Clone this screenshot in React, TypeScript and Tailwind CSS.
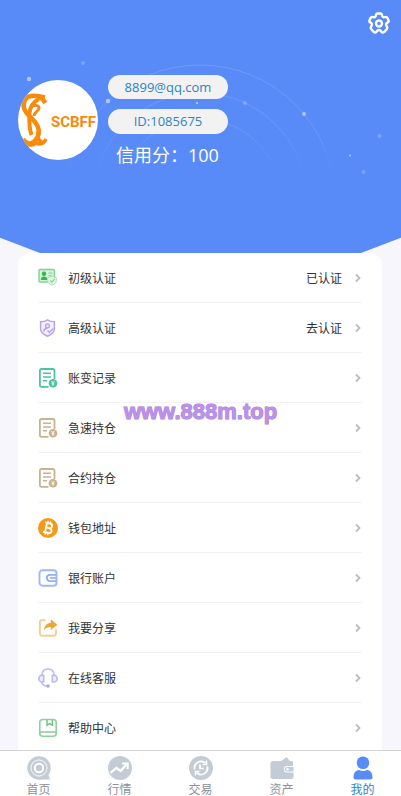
import type { ReactNode } from 'react'
import clsx from 'clsx'

type MenuItem = {
  label: string
  icon: ReactNode
  status?: string
}

type TabItem = {
  label: string
  icon: ReactNode
  active?: boolean
}

const IdCardIcon = () => (
  <svg viewBox='0 0 20 20' className='size-5 shrink-0' fill='none'>
    <rect x='1' y='1.5' width='15.500' height='12.500' rx='1.200' fill='#d5f2da' stroke='#7fd490' strokeWidth='1.400' />
    <circle cx='6' cy='5.800' r='2.200' fill='#35b653' />
    <path d='M2.800 12c0-2.500 1.200-3.500 3.200-3.500s3.400 1 3.400 3.500z' fill='#35b653' />
    <path d='M10.500 5h4M10.500 7.700h3' stroke='#7fd490' />
    <path d='M14 8.200l4.300 1.500v3c0 2.200-1.700 3.500-4.300 4.500-2.600-1-4.300-2.300-4.300-4.500v-3z' fill='#e2f7e6' stroke='#a6e0b1' />
    <path d='M12 12.500l1.700 1.800 3-3.400' stroke='#8bd79a' strokeWidth='1.300' />
  </svg>
)

const ShieldIcon = () => (
  <svg viewBox='0 0 20 20' className='size-5 shrink-0' fill='none' stroke='#b9a3ec'>
    <path d='M9.500 1.800c2.100 1.500 4.400 2 6.900 2v7.200c0 3.400-2.500 5.300-6.900 7.200-4.400-1.900-6.900-3.800-6.900-7.200V3.800c2.500 0 4.800-.5 6.900-2z' fill='#f4f0fe' strokeWidth='1.500' />
    <circle cx='9.500' cy='7.800' r='2' fill='#e7dffb' strokeWidth='1.300' />
    <path d='M5.700 13.700c.3-2.200 1.500-3.400 3.800-3.400M9.500 12.500l1.900 1.900 3.800-3.900' strokeWidth='1.500' />
  </svg>
)

const DocumentIcon = ({ color }: { color: string }) => (
  <svg viewBox='0 0 20 20' className='size-5 shrink-0' fill='none' stroke={color} strokeWidth='1.800'>
    <path d='M10.500 18.800H3.500a1.600 1.600 0 0 1-1.600-1.600V2.600A1.600 1.600 0 0 1 3.500 1h11.400a1.600 1.600 0 0 1 1.600 1.600V11' />
    <path d='M5 5.300h8M5 9h8M5 12.700h4' strokeWidth='1.600' />
    <circle cx='15' cy='15.300' r='4.300' fill={color} stroke='none' />
    <path d='M13.500 13l1.500 1.900 1.500-1.900M15 14.900v3M13.600 15.800h2.800' stroke='#fff' strokeWidth='.9' />
  </svg>
)

const BitcoinIcon = () => (
  <svg viewBox='0 0 20 20' className='size-5 shrink-0' fill='none'>
    <circle cx='10' cy='10' r='10' fill='#f59a17' />
    <g transform='rotate(13 10 10)' stroke='#fff' strokeWidth='1.900'>
      <path d='M6 5.200h5c3.300 0 3.300 4.600 0 4.600H8M11 9.800c4.200 0 4.200 5 0 5H6M8 5.200v9.600' />
      <path d='M8.600 3v2M11.200 3v2M8.600 15v2M11.200 15v2' strokeWidth='1.400' />
    </g>
  </svg>
)

const WalletIcon = () => (
  <svg viewBox='0 0 20 20' className='size-5 shrink-0' fill='none' stroke='#9db8f4' strokeWidth='1.900'>
    <rect x='1.500' y='2.300' width='17' height='15.400' rx='3' />
    <path d='M18.500 6.900h-6.600a3 3 0 0 0 0 6.200h6.600' stroke='#8eaef2' />
    <path d='M11.800 10h6.500' stroke='#8eaef2' strokeWidth='1.600' />
  </svg>
)

const ShareIcon = () => (
  <svg viewBox='0 0 20 20' className='size-5 shrink-0' fill='none'>
    <path d='M7.500 2.200H4A2.200 2.200 0 0 0 1.900 4.400v11.100a2.200 2.200 0 0 0 2.200 2.200h11.700a2.200 2.200 0 0 0 2.200-2.200V11.500' stroke='#efcf94' strokeWidth='1.900' />
    <path d='M12.800 1.200l6.600 5.500-6.600 5.200V9c-3 0-5 .7-6.800 3.200.3-4.500 2.900-7 6.800-7.400z' fill='#e9a93a' />
  </svg>
)

const HeadsetIcon = () => (
  <svg viewBox='0 0 20 20' className='size-5 shrink-0' fill='none' stroke='#bdb9f3' strokeWidth='1.600'>
    <path d='M3.700 7.500C4 3.500 6.500 1 10 1s6 2.500 6.300 6.500' />
    <path d='M5.700 7.300v6.500c-3 .7-4.900-.8-4.900-3.200s1.900-4 4.900-3.300zM14.300 7.300v6.500c3 .7 4.900-.8 4.900-3.200s-1.900-4-4.900-3.300z' fill='#eeedff' />
    <path d='M3.300 13.700c1 2.800 3 4.200 5.500 4.300' />
    <circle cx='10' cy='18' r='1.800' fill='#aaa5ef' stroke='none' />
  </svg>
)

const BookIcon = () => (
  <svg viewBox='0 0 20 20' className='size-5 shrink-0' fill='none' stroke='#8fd09a' strokeWidth='1.600'>
    <rect x='1.800' y='1.500' width='16.400' height='16.700' rx='3' />
    <path d='M2 14h16' />
    <path d='M9 2v5.300l2.700-1.700 2.700 1.700V2' stroke='#6dbd7b' strokeWidth='1.400' />
  </svg>
)

const HomeTabIcon = () => (
  <svg viewBox='0 0 24 24' className='size-6 shrink-0' fill='none'>
    <circle cx='12' cy='12' r='11.700' fill='#c3ccd4' />
    <path d='M14 18h7l2 5.500h-9z' fill='#c3ccd4' />
    <circle cx='12' cy='12' r='8' stroke='#e9edf0' strokeWidth='1.300' />
    <circle cx='12' cy='12' r='4.200' stroke='#fff' strokeWidth='2' />
  </svg>
)

const MarketTabIcon = () => (
  <svg viewBox='0 0 24 24' className='size-6 shrink-0' fill='none'>
    <circle cx='12' cy='12' r='12' fill='#c3ccd4' />
    <path d='M2.500 16.800l6-4.800 4 3 6-6.500' stroke='#fff' strokeWidth='2.200' />
    <path d='M14 7.500h5.700v5.500' stroke='#fff' strokeWidth='2' />
  </svg>
)

const TradeTabIcon = () => (
  <svg viewBox='0 0 24 24' className='size-6 shrink-0' fill='none'>
    <circle cx='12' cy='12' r='12' fill='#c3ccd4' />
    <path d='M5.700 13.500A6.500 6.500 0 0 1 16.500 7.300M18.300 10.500A6.500 6.500 0 0 1 7.500 16.700' stroke='#fff' strokeWidth='1.700' />
    <path d='M17.500 4.500v4h-4M6.500 19.500v-4h4' stroke='#fff' strokeWidth='1.500' />
    <path d='M11 8.500v4h4' stroke='#fff' strokeWidth='1.700' />
  </svg>
)

const AssetsTabIcon = () => (
  <svg viewBox='0 0 24 24' className='size-6 shrink-0' fill='#c3ccd4'>
    <path d='M10 6l5.500-4.300a1.500 1.500 0 0 1 2 .2l3 4.100z' />
    <path d='M3 5h18.500A1.500 1.500 0 0 1 23 6.500V10h-6a3.200 3.200 0 0 0 0 6.400h6.500V21a2 2 0 0 1-2 2H3a2.500 2.500 0 0 1-2.500-2.500v-13A2.500 2.500 0 0 1 3 5z' />
    <path d='M17 11h6.500v4.400H17a2.200 2.200 0 0 1 0-4.400z' />
    <circle cx='17.500' cy='13.200' r='1.200' fill='#fff' />
  </svg>
)

const MineTabIcon = () => (
  <svg viewBox='0 0 24 24' className='size-6 shrink-0' fill='#588bf7'>
    <circle cx='12' cy='6.800' r='6.300' />
    <path d='M2.500 21.500c0-5 2.500-7.300 5.500-7.500 2.500 1.300 5.500 1.300 8 0 3 .2 5.500 2.500 5.500 7.500 0 1.300-.8 2-2 2h-15c-1.200 0-2-.7-2-2z' />
  </svg>
)

const Chevron = () => (
  <svg viewBox='0 0 8 10' className='w-2 h-2.5 shrink-0' fill='none' stroke='#b9bcc4' strokeWidth='1.800'>
    <path d='M2 1.500l3.500 3.500L2 8.500' />
  </svg>
)

const SettingsIcon = () => (
  <svg viewBox='0 0 24 24' className='size-6' fill='none' stroke='#fff' strokeWidth='2.400' strokeLinejoin='round'>
    <path d='M9 4.200Q9.200 2.500 10.800 2.500h2.400Q14.800 2.500 15 4.200q.3 2.600 2.900 2 1.900-.6 2.600.8l1 2.300q.5 1.500-1.100 2.300-2.300 1.300-.8 3.400 1.200 1.700.2 3l-2 2.400-1.700 1.100q-1.300.2-2.100-1.300-.7-1.200-2-1.200t-2 1.200q-.8 1.500-2.100 1.300L6.200 20.400l-2-2.400q-1-1.300.2-3 1.500-2.100-.8-3.400-1.600-.8-1.100-2.300l1-2.300q.7-1.400 2.600-.8 2.600.6 2.900-2z' />
    <circle cx='12' cy='12.500' r='3' />
  </svg>
)

const HeaderDecor = () => (
  <svg viewBox='0 0 401 253' className='absolute inset-0 size-full' fill='none' preserveAspectRatio='xMidYMin slice' aria-hidden='true'>
    <defs>
      <linearGradient id='arc' x1='0' y1='65' x2='0' y2='172' gradientUnits='userSpaceOnUse'>
        <stop offset='0' stopColor='#fff' stopOpacity='.14' />
        <stop offset='.6' stopColor='#fff' stopOpacity='.12' />
        <stop offset='1' stopColor='#fff' stopOpacity='0' />
      </linearGradient>
    </defs>
    <g stroke='url(#arc)'>
      <circle cx='200' cy='200' r='135' />
      <circle cx='200' cy='200' r='107' />
      <circle cx='200' cy='200' r='81' />
    </g>
    <g fill='#fff'>
      <g fillOpacity='.5'>
        <circle cx='29' cy='79' r='2.200' />
        <circle cx='108' cy='101' r='2.200' />
        <circle cx='304' cy='114' r='2' />
        <circle cx='197' cy='103' r='1.200' />
        <circle cx='350' cy='155.500' r='1' />
      </g>
      <g fillOpacity='.22'>
        <circle cx='83' cy='63' r='2' />
        <circle cx='245' cy='103' r='2' />
        <circle cx='379.500' cy='136' r='2' />
        <circle cx='363.500' cy='172' r='2' />
      </g>
    </g>
  </svg>
)

const Avatar = () => (
  <div className='size-20 shrink-0 rounded-full bg-white overflow-hidden'>
    <svg viewBox='0 0 80 80' className='size-full' fill='none' role='img' aria-label='SCBFF'>
      <g stroke='#f98a0b' strokeWidth='4.500'>
        <path d='M27.500 23C24 17 19 15 13 16 7 17 4.500 23 6 28c1.500 6 7 9 11 14 4 5 5 11 2 16-4 7-11 7-14 1' />
        <path d='M21 19c-6 3-9 8-9.500 14-.5 8-.5 15 2 22' strokeWidth='4' />
        <path d='M12 28c4-4 9-3 9 0 0 3-5 4-5 8' strokeWidth='3' />
        <path d='M13 17c4-3 9-1 14 0M6 62c4 4 9 4 12 1 4 2 8 1 10-4M20 52c-1 6 2 11 6 10' strokeWidth='3.500' />
      </g>
      <text x='33' y='47' fill='#f98a0b' className='font-["Roboto","Liberation_Sans",sans-serif] text-[15px] font-bold'>
        SCBFF
      </text>
    </svg>
  </div>
)

const menuItems: MenuItem[] = [
  { label: '初级认证', icon: <IdCardIcon />, status: '已认证' },
  { label: '高级认证', icon: <ShieldIcon />, status: '去认证' },
  { label: '账变记录', icon: <DocumentIcon color='#4dc3a0' /> },
  { label: '急速持仓', icon: <DocumentIcon color='#c9b38c' /> },
  { label: '合约持仓', icon: <DocumentIcon color='#c9b38c' /> },
  { label: '钱包地址', icon: <BitcoinIcon /> },
  { label: '银行账户', icon: <WalletIcon /> },
  { label: '我要分享', icon: <ShareIcon /> },
  { label: '在线客服', icon: <HeadsetIcon /> },
  { label: '帮助中心', icon: <BookIcon /> },
]

const tabs: TabItem[] = [
  { label: '首页', icon: <HomeTabIcon /> },
  { label: '行情', icon: <MarketTabIcon /> },
  { label: '交易', icon: <TradeTabIcon /> },
  { label: '资产', icon: <AssetsTabIcon /> },
  { label: '我的', icon: <MineTabIcon />, active: true },
]

const App = () => {
  return (
    <div className='relative h-screen flex flex-col overflow-hidden bg-[#f6f6fc] text-[#333] font-["Open_Sans","Noto_Sans_CJK_SC",sans-serif]'>
      <main className='flex-1 min-h-0 overflow-hidden'>
        {/* Header */}
        <header className='relative bg-[#588bf7] px-[18px] pt-[11px] pb-[84px] [clip-path:polygon(0_0,100%_0,100%_94%,90%_100%,10%_100%,0_94%)]'>
          <HeaderDecor />
          <div className='relative flex justify-end -mr-2'>
            <button type='button' aria-label='设置'>
              <SettingsIcon />
            </button>
          </div>
          <div className='relative flex gap-[10px] pt-10'>
            <div className='pt-[5px]'>
              <Avatar />
            </div>
            <div>
              <p className='w-[120px] h-6 mb-[10px] rounded-full bg-[#f2f2f2] text-[#2e83c3] text-[13px] leading-6 text-center'>8899@qq.com</p>
              <p className='w-[120px] h-[25px] mb-[7px] rounded-full bg-[#f2f2f2] text-[#2e83c3] text-[13px] leading-6 text-center'>ID:1085675</p>
              <p className='pl-2 text-white text-lg leading-7 whitespace-nowrap'>信用分：100</p>
            </div>
          </div>
        </header>

        {/* Menu */}
        <ul className='ml-[18px] mr-[19px] px-5 bg-white rounded-t-xl text-xs'>
          {menuItems.map(item => (
            <li key={item.label} className='border-b border-[#f2f2f2]'>
              <button type='button' className='w-full h-[49px] flex items-center cursor-pointer'>
                {item.icon}
                <span className='ml-[10px] pt-[2px]'>{item.label}</span>
                <span className='ml-auto mr-3 pt-[2px]'>{item.status}</span>
                <Chevron />
              </button>
            </li>
          ))}
        </ul>
      </main>

      {/* Bottom tabs */}
      <nav className='h-[46px] shrink-0 overflow-hidden bg-white border-t border-[#d2d2d6] flex pt-[5px] -mx-[2px]'>
        {tabs.map(tab => (
          <a
            key={tab.label}
            href='#'
            className={clsx('flex-1 flex flex-col items-center text-xs leading-5', tab.active ? 'text-[#2e83d3]' : 'text-[#8a949c]')}
          >
            {tab.icon}
            <span>{tab.label}</span>
          </a>
        ))}
      </nav>

      <span className='absolute left-1/2 -translate-x-1/2 top-[398px] font-["Liberation_Sans",sans-serif] font-bold text-[22px] leading-7 text-[#bf8ff0] [-webkit-text-stroke:1px_#9c84bd] [paint-order:stroke_fill]'>
        www.888m.top
      </span>
    </div>
  )
}

export default App
